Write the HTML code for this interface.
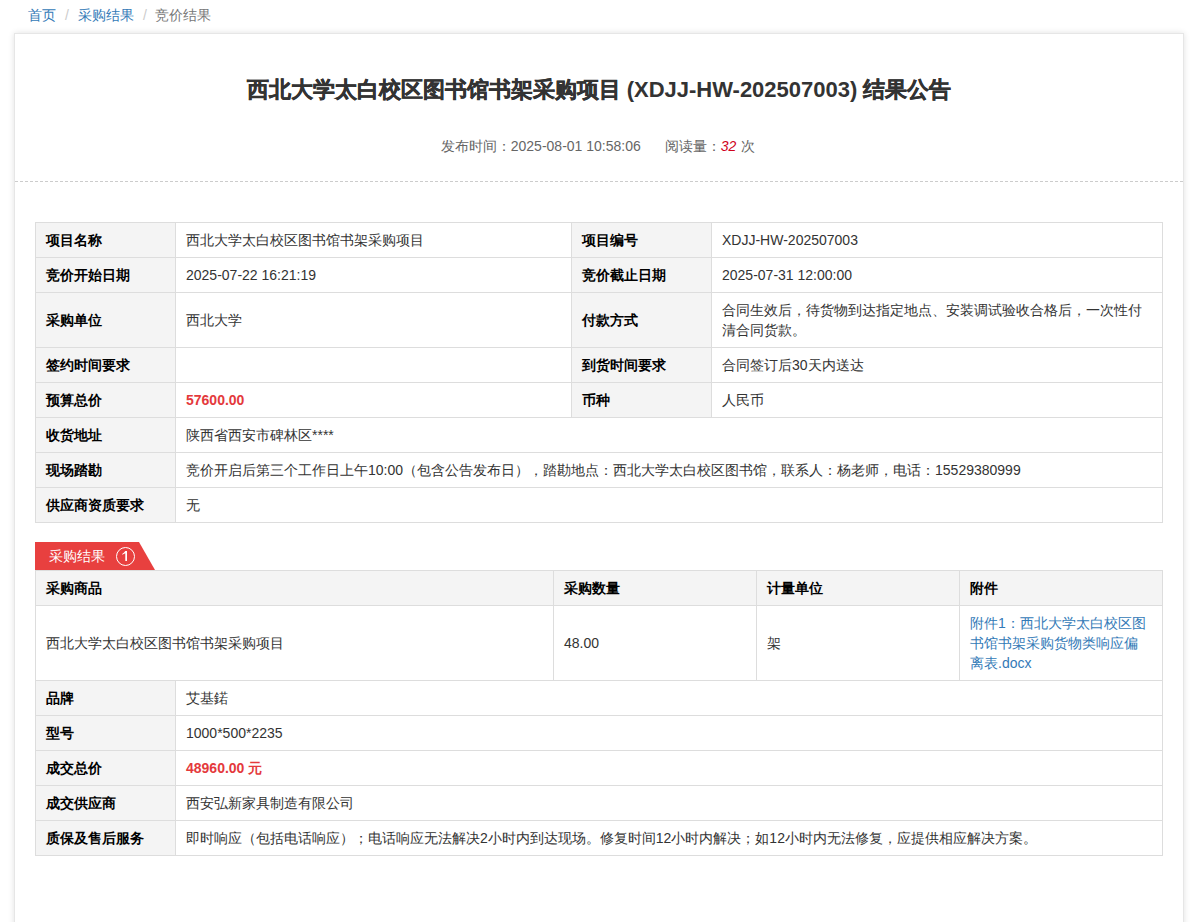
<!DOCTYPE html>
<html><head><meta charset="utf-8">
<style>
html,body{margin:0;padding:0;background:#fff;overflow:hidden;}
body{width:1192px;height:922px;position:relative;font-family:"Liberation Sans",sans-serif;font-size:14px;color:#333;}
.bc{position:absolute;left:28px;top:5px;height:20px;line-height:20px;font-size:14px;white-space:nowrap;}
.bc a{color:#337ab7;text-decoration:none;}
.bc .sep{color:#ccc;display:inline-block;text-align:center;}
.bc .act{color:#777;}
.card{position:absolute;left:14px;top:33px;width:1168px;height:1000px;border:1px solid #e6e6e6;box-shadow:0 0 6px rgba(0,0,0,.12);background:#fff;}
.title{position:absolute;left:3px;top:75px;width:1192px;text-align:center;font-size:22px;font-weight:bold;color:#333;line-height:30px;white-space:nowrap;}
.title b{font-weight:bold;-webkit-text-stroke:0.4px #333;}
.meta{position:absolute;left:2px;top:136px;width:1192px;text-align:center;font-size:14px;color:#666;line-height:20px;white-space:nowrap;}
.meta i{color:#d0021b;font-style:italic;margin-right:1px;}
.dash{position:absolute;left:15px;top:181px;width:1168px;height:1px;background:repeating-linear-gradient(to right,#ccc 0,#ccc 3px,transparent 3px,transparent 5px);}
table{border-collapse:separate;border-spacing:0;table-layout:fixed;position:absolute;left:35px;width:1128px;border-left:1px solid #ddd;border-top:1px solid #ddd;}
td{border-right:1px solid #ddd;border-bottom:1px solid #ddd;padding:7px 10px;line-height:20px;font-size:14px;vertical-align:middle;color:#333;word-break:break-all;}
td.l{background:#f4f4f4;font-weight:bold;color:#000;}
.red{color:#e4393c;font-weight:bold;}
.lnk{color:#337ab7;}
.t1{top:222px;}
.t2{top:570px;}
.t3{top:681px;border-top:none;}
.tab{position:absolute;left:35px;top:542px;width:120px;height:28px;}
.tab svg{position:absolute;left:0;top:0;}
.tab .tx{position:absolute;left:14px;top:4px;line-height:20px;color:#fff;font-size:14px;white-space:nowrap;}
.tab .num{position:absolute;left:81px;top:5px;width:17px;height:17px;border:1px solid #fff;border-radius:50%;color:#fff;font-size:14px;line-height:17px;text-align:center;}
</style></head><body>
<div class="bc"><a>首页</a><span class="sep" style="width:22px">/</span><a>采购结果</a><span class="sep" style="width:22px">/</span><span class="act" style="margin-left:-1px">竞价结果</span></div>
<div class="card"></div>
<div class="title"><b>西北大学太白校区图书馆书架采购项目</b> (XDJJ-HW-202507003) <b>结果公告</b></div>
<div class="meta">发布时间：2025-08-01 10:58:06<span style="display:inline-block;width:24px"></span>阅读量：<i>32</i> 次</div>
<div class="dash"></div>

<table class="t1">
<colgroup><col style="width:140px"><col style="width:396px"><col style="width:140px"><col style="width:451px"></colgroup>
<tr><td class="l">项目名称</td><td>西北大学太白校区图书馆书架采购项目</td><td class="l">项目编号</td><td>XDJJ-HW-202507003</td></tr>
<tr><td class="l">竞价开始日期</td><td>2025-07-22 16:21:19</td><td class="l">竞价截止日期</td><td>2025-07-31 12:00:00</td></tr>
<tr><td class="l">采购单位</td><td>西北大学</td><td class="l">付款方式</td><td>合同生效后，待货物到达指定地点、安装调试验收合格后，一次性付<br>清合同货款。</td></tr>
<tr><td class="l">签约时间要求</td><td></td><td class="l">到货时间要求</td><td>合同签订后30天内送达</td></tr>
<tr><td class="l">预算总价</td><td><span class="red">57600.00</span></td><td class="l">币种</td><td>人民币</td></tr>
<tr><td class="l">收货地址</td><td colspan="3">陕西省西安市碑林区****</td></tr>
<tr><td class="l">现场踏勘</td><td colspan="3">竞价开启后第三个工作日上午10:00（包含公告发布日），踏勘地点：西北大学太白校区图书馆，联系人：杨老师，电话：15529380999</td></tr>
<tr><td class="l">供应商资质要求</td><td colspan="3">无</td></tr>
</table>

<div class="tab"><svg width="120" height="28"><polygon points="0,0 104,0 120,28 0,28" fill="#e8403f"/><circle cx="90.5" cy="14.5" r="9" fill="none" stroke="#fff" stroke-width="1"/><path d="M90.3 9 H92 V19 H90.3 V11.3 Q88.8 12.3 87.2 12.7 V11.9 Q89.3 10.8 90.3 9Z" fill="#fff"/></svg><span class="tx">采购结果</span></div>

<table class="t2">
<colgroup><col style="width:518px"><col style="width:203px"><col style="width:203px"><col style="width:203px"></colgroup>
<tr><td class="l">采购商品</td><td class="l">采购数量</td><td class="l">计量单位</td><td class="l">附件</td></tr>
<tr><td>西北大学太白校区图书馆书架采购项目</td><td>48.00</td><td>架</td><td class="lnk">附件1：西北大学太白校区图<br>书馆书架采购货物类响应偏<br>离表.docx</td></tr>
</table>

<table class="t3">
<colgroup><col style="width:140px"><col style="width:987px"></colgroup>
<tr><td class="l">品牌</td><td>艾基鍩</td></tr>
<tr><td class="l">型号</td><td>1000*500*2235</td></tr>
<tr><td class="l">成交总价</td><td><span class="red">48960.00 元</span></td></tr>
<tr><td class="l">成交供应商</td><td>西安弘新家具制造有限公司</td></tr>
<tr><td class="l">质保及售后服务</td><td>即时响应（包括电话响应）；电话响应无法解决2小时内到达现场。修复时间12小时内解决；如12小时内无法修复，应提供相应解决方案。</td></tr>
</table>
</body></html>
